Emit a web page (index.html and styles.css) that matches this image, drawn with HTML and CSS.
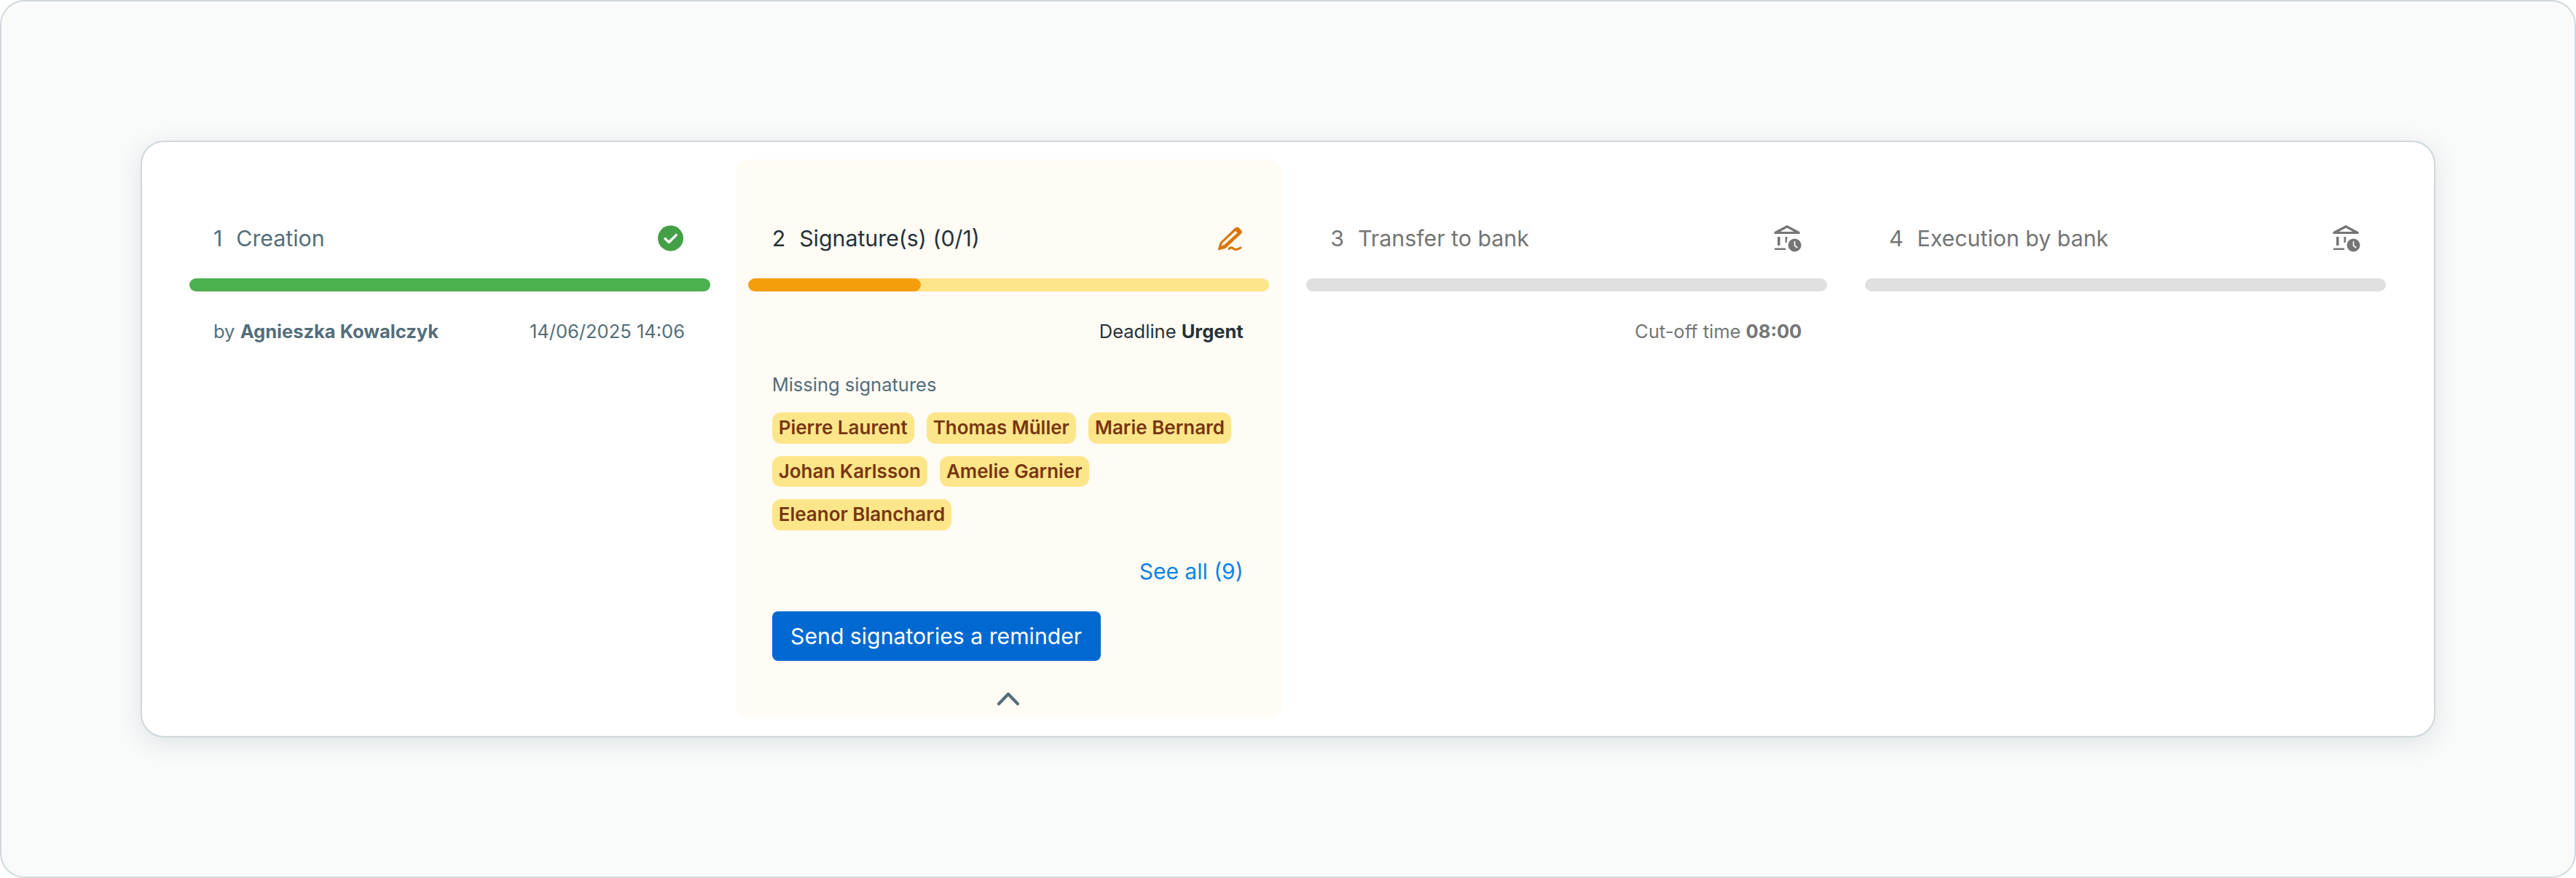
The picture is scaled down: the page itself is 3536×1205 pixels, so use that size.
FILE: index.html
```html
<!DOCTYPE html>
<html lang="en">
<head>
    <meta charset="UTF-8">
    <title>Payment steps</title>
    <link rel="stylesheet" href="styles.css">
</head>
<body>
    <div class="frame">
        <div class="card">
            <div class="step step-done">
                <div class="step-head">
                    <span class="step-title"><span class="step-num">1</span>Creation</span>
                    <svg class="icon" width="38" height="38" viewBox="0 0 38 38">
                        <circle cx="18.500" cy="19" r="17.500" fill="#43a047"/>
                        <path d="M11 19.500l5.200 5 10-10" fill="none" stroke="#fff" stroke-width="3.400" stroke-linecap="round" stroke-linejoin="round"/>
                    </svg>
                </div>
                <div class="bar bar-green"></div>
                <div class="meta meta-split">
                    <span>by <b>Agnieszka Kowalczyk</b></span>
                    <span>14/06/2025 14:06</span>
                </div>
            </div>

            <div class="step step-active">
                <div class="step-head">
                    <span class="step-title"><span class="step-num">2</span>Signature(s) (0/1)</span>
                    <svg class="icon" width="38" height="38" viewBox="0 0 38 38">
                        <path d="M2.500 35.500L5.500 25 25.500 5.500Q29 2.500 32 5L34.500 7.500Q37 10.500 34.500 13L13 33zM7.500 29.500L11.500 28 29.500 11.500 27 9 9 25.500z" fill="#d97706" fill-rule="evenodd"/>
                        <path d="M18 33.500c1.500-1.800 3.200-2 5-1s3 2.300 5 2 4-1.300 6-2.500" fill="none" stroke="#d97706" stroke-width="3" stroke-linecap="round"/>
                    </svg>
                </div>
                <div class="bar bar-amber"><div class="bar-fill"></div></div>
                <div class="meta meta-right"><span>Deadline <b>Urgent</b></span></div>
                <div class="missing">
                    <div class="missing-label">Missing signatures</div>
                    <div class="tags">
                        <span class="tag">Pierre Laurent</span>
                        <span class="tag">Thomas Müller</span>
                        <span class="tag">Marie Bernard</span>
                        <span class="tag">Johan Karlsson</span>
                        <span class="tag">Amelie Garnier</span>
                        <span class="tag">Eleanor Blanchard</span>
                    </div>
                    <div class="see-all"><a href="#">See all (9)</a></div>
                    <button class="btn">Send signatories a reminder</button>
                </div>
                <div class="collapse">
                    <svg width="32" height="20" viewBox="0 0 32 20">
                        <path d="M3 17L16 3.500 29 17" fill="none" stroke="#546e7a" stroke-width="4.200" stroke-linecap="round" stroke-linejoin="round"/>
                    </svg>
                </div>
            </div>

            <div class="step step-todo">
                <div class="step-head">
                    <span class="step-title"><span class="step-num">3</span>Transfer to bank</span>
                    <svg class="icon" width="38" height="38" viewBox="0 0 38 38">
                        <path d="M18 1L.5 10.200v2.800h35v-2.800zM18 4.800L8.500 10h19z" fill="#757575" fill-rule="evenodd"/>
                        <path d="M5 17h3.500v12H5zM15.500 17h3l-.8 8h-2.200zM1 32.500h15V35H1z" fill="#757575"/>
                        <circle cx="28.500" cy="28.500" r="9" fill="#757575"/>
                        <path d="M28.500 23v6l3.800 3" fill="none" stroke="#fff" stroke-width="1.600"/>
                    </svg>
                </div>
                <div class="bar bar-gray"></div>
                <div class="meta meta-right"><span>Cut-off time <b>08:00</b></span></div>
            </div>

            <div class="step step-todo">
                <div class="step-head">
                    <span class="step-title"><span class="step-num">4</span>Execution by bank</span>
                    <svg class="icon" width="38" height="38" viewBox="0 0 38 38">
                        <path d="M18 1L.5 10.200v2.800h35v-2.800zM18 4.800L8.500 10h19z" fill="#757575" fill-rule="evenodd"/>
                        <path d="M5 17h3.500v12H5zM15.500 17h3l-.8 8h-2.200zM1 32.500h15V35H1z" fill="#757575"/>
                        <circle cx="28.500" cy="28.500" r="9" fill="#757575"/>
                        <path d="M28.500 23v6l3.800 3" fill="none" stroke="#fff" stroke-width="1.600"/>
                    </svg>
                </div>
                <div class="bar bar-gray"></div>
            </div>
        </div>
    </div>
</body>
</html>
```

FILE: styles.css
```css
* {
    box-sizing: border-box;
}
body {
    margin: 0;
    font-family: Inter, "Liberation Sans", sans-serif;
    background-color: #fff;
}
.frame {
    display: flex;
    align-items: center;
    justify-content: center;
    height: 1205px;
    background-color: #f9fafa;
    border: 2px solid #cfd8dc;
    border-radius: 34px;
}
.card {
    display: grid;
    grid-template-columns: repeat(4, 750px);
    column-gap: 16.670px;
    align-items: start;
    width: 3150px;
    height: 819px;
    padding: 24px 48px;
    background-color: #fff;
    border: 2px solid #cfd8dc;
    border-radius: 32px;
    box-shadow: 0 8px 32px rgba(84, 110, 122, 0.16);
}
.step {
    padding: 0 18px 0 17px;
}
.step-active {
    height: 765px;
    background-color: #fffbf5;
    border-radius: 17px;
}
.step-head {
    display: flex;
    align-items: center;
    justify-content: space-between;
    height: 163px;
    padding: 52px 35px 0 33px;
}
.step-title {
    font-size: 30.300px;
    color: #546e7a;
}
.step-active .step-title {
    color: #263238;
}
.step-todo .step-title {
    color: #757575;
}
.step-num {
    margin-right: 19px;
}
.icon {
    display: block;
}
.bar {
    height: 18px;
    border-radius: 9px;
    overflow: hidden;
}
.bar-green {
    background-color: #4caf50;
}
.bar-amber {
    background-color: #fde68a;
}
.bar-fill {
    width: 33.200%;
    height: 100%;
    background-color: #f59e0b;
    border-radius: 9px;
}
.bar-gray {
    background-color: #e0e0e0;
}
.meta {
    display: flex;
    align-items: center;
    height: 50px;
    margin-top: 29px;
    padding: 0 35px 0 33px;
    font-size: 25.500px;
    color: #757575;
}
.meta b {
    font-weight: 700;
}
.meta-split {
    justify-content: space-between;
}
.meta-right {
    justify-content: flex-end;
}
.step-done .meta {
    color: #546e7a;
}
.step-active .meta {
    color: #263238;
}
.missing {
    padding: 0 35px 0 33px;
}
.missing-label {
    margin-top: 33px;
    font-size: 25.500px;
    line-height: 32px;
    color: #546e7a;
}
.tags {
    display: flex;
    flex-wrap: wrap;
    gap: 17px;
    margin-top: 22px;
}
.tag {
    height: 42.500px;
    padding: 0 9px;
    font-size: 26px;
    font-weight: 600;
    line-height: 42.500px;
    color: #78350f;
    background-color: #fde68a;
    border-radius: 12px;
}
.see-all {
    margin-top: 36px;
    font-size: 30px;
    line-height: 40px;
    text-align: right;
}
.see-all a {
    color: #0d84e8;
    text-decoration: none;
}
.btn {
    display: block;
    width: 451px;
    height: 68px;
    margin-top: 35px;
    padding: 0;
    font-family: inherit;
    font-size: 30.200px;
    font-weight: 400;
    color: #fff;
    background-color: #0069d1;
    border: none;
    border-radius: 8px;
    cursor: pointer;
}
.collapse {
    display: flex;
    justify-content: center;
    margin-top: 42px;
}
.collapse svg {
    display: block;
}
```
